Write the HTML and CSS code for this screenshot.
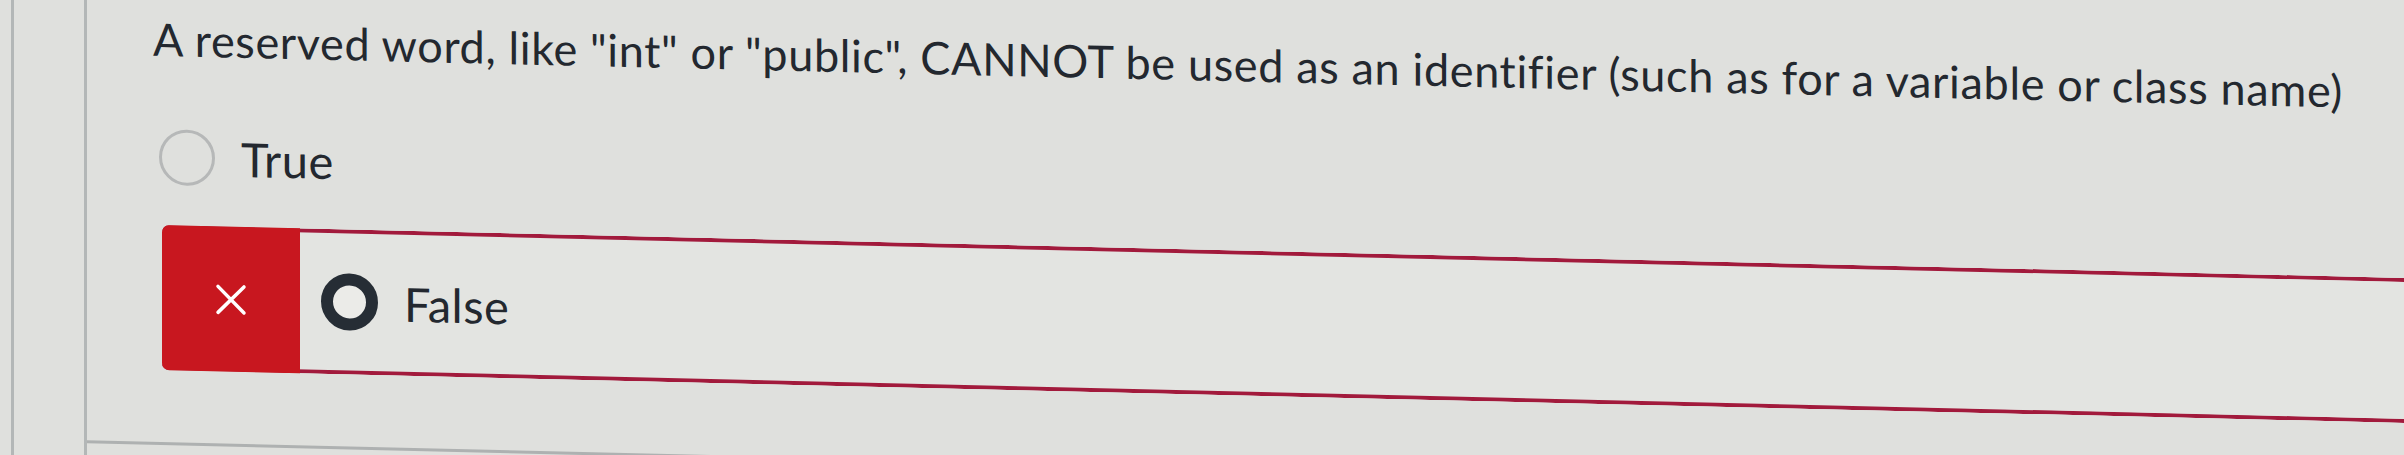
FILE: index.html
```html
<!DOCTYPE html>
<html lang="en">
<head>
    <meta charset="UTF-8">
    <meta name="viewport" content="width=device-width, initial-scale=1.0">
    <title>Quiz Results</title>
    <link rel="stylesheet" href="styles.css">
</head>
<body>
    <div class="page">
        <div class="edge"></div>
        <div class="rail"></div>
        <main class="content">
            <p class="question-text">A reserved word, like "int" or "public", CANNOT be used as an identifier (such as for a variable or class name)</p>
            <div class="answers">
                <div class="answer">
                    <span class="radio"></span>
                    <span class="answer-label">True</span>
                </div>
                <div class="answer answer-wrong">
                    <div class="answer-flag">
                        <svg width="32" height="32" viewBox="0 0 32 32">
                            <path d="M3 3 L29 29 M29 3 L3 29" stroke="#fff" stroke-width="3.5" stroke-linecap="round" fill="none"/>
                        </svg>
                    </div>
                    <span class="radio radio-checked"></span>
                    <span class="answer-label">False</span>
                </div>
            </div>
        </main>
    </div>
</body>
</html>
```

FILE: styles.css
```css
body {
    margin: 0;
    background-color: #dfe0dd;
    color: #23282f;
    font-family: Lato, "Open Sans", sans-serif;
    overflow: hidden;
}
.page {
    display: flex;
    height: 520px;
    transform: skewY(1.35deg);
    transform-origin: 160px 0;
}
.edge {
    width: 11px;
    border-right: 3px solid #b3b7b7;
}
.rail {
    width: 70px;
    border-right: 3px solid #b3b7b7;
}
.content {
    flex: 1;
    box-sizing: border-box;
    height: 445px;
    padding: 13px 0 0 66px;
    border-bottom: 3px solid #aeb1b1;
}
.question-text {
    margin: 0;
    font-size: 45px;
    line-height: 53px;
    letter-spacing: 0.65px;
    white-space: nowrap;
}
.answers {
    margin-top: 63px;
    padding-left: 6px;
}
.answer {
    display: flex;
    align-items: center;
    height: 56px;
}
.answer-label {
    font-size: 47px;
    line-height: 56px;
    letter-spacing: 0.5px;
    margin-left: 26px;
}
.radio {
    box-sizing: border-box;
    width: 56px;
    height: 56px;
    border: 3px solid #b6b8b8;
    border-radius: 50%;
}
.answer-wrong {
    box-sizing: border-box;
    height: 145px;
    margin: 40px -10px 0 3px;
    border-top: 4px solid #a21a3c;
    border-bottom: 4px solid #a21a3c;
    border-radius: 7px 0 0 7px;
    background-color: #e3e4e1;
}
.answer-flag {
    align-self: stretch;
    display: flex;
    align-items: center;
    justify-content: center;
    width: 138px;
    margin: -4px 0;
    background-color: #c8171f;
    border-radius: 7px 0 0 7px;
}
.radio-checked {
    width: 57px;
    height: 57px;
    margin-left: 21px;
    border: 12px solid #262d35;
    background-color: #ebebe8;
}
```
